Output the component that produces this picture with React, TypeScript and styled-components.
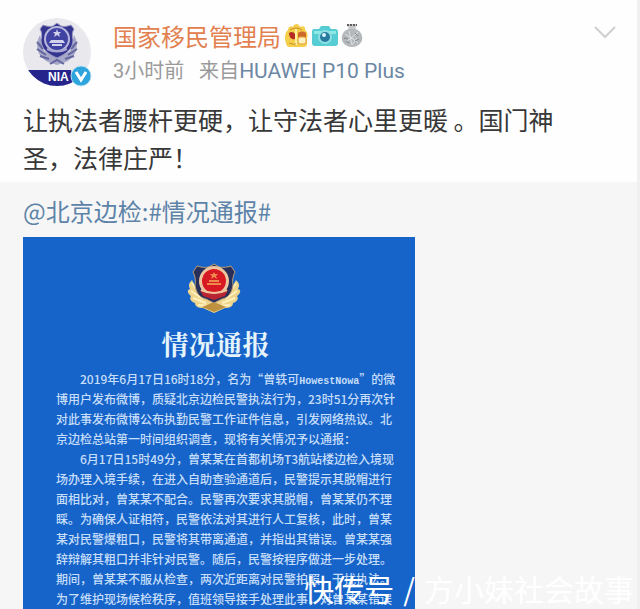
import React from "react";
import styled, { createGlobalStyle } from "styled-components";

const Global = createGlobalStyle`
  * { box-sizing: border-box; }
  body {
    margin: 0;
    background: #f6f6f6;
    font-family: Roboto, "Noto Sans CJK SC", sans-serif;
  }
  h1, h2, p { margin: 0; font-weight: 400; }
  a { color: inherit; text-decoration: none; }
`;

const Page = styled.main`
  position: relative;
  min-height: 100vh;
  border-right: 3px solid #f0f0f0;
`;

const Post = styled.article`
  background: #fefefe;
  padding: 18px 20px 6px 23px;
`;

const Header = styled.header`
  display: flex;
  align-items: flex-start;
  gap: 21px;
`;

const Author = styled.div`
  flex: 1;
  min-width: 0;
`;

const NameRow = styled.div`
  display: flex;
  align-items: center;
  gap: 3px;
  height: 36px;
`;

const Name = styled.h1`
  font-family: "Noto Sans CJK SC", sans-serif;
  font-size: 24px;
  line-height: 36px;
  color: #e2804f;
  white-space: nowrap;
`;

const Meta = styled.p`
  font-size: 20px;
  line-height: 34px;
  color: #9a9a9a;
  white-space: pre;
`;

const Device = styled.a`
  font-size: 21px;
  color: #6c87a3;
`;

const MoreButton = styled.button`
  margin: 6px 0 0;
  padding: 0;
  border: 0;
  background: none;
  line-height: 0;
`;

const Message = styled.p`
  font-family: "Noto Sans CJK SC", sans-serif;
  font-size: 25px;
  line-height: 38px;
  color: #383838;
  padding-top: 12px;
`;

const Repost = styled.section`
  padding: 11px 20px 0 23px;
`;

const RepostTitle = styled.p`
  font-family: "Noto Sans CJK SC", sans-serif;
  font-size: 24px;
  line-height: 36px;
  color: #5d83a8;
  margin-bottom: 8px;
`;

const Notice = styled.div`
  max-width: 392px;
  background: #1664c9;
  padding: 26px 20px 0 33px;
  display: flex;
  flex-direction: column;
`;

const Crest = styled.div`
  align-self: center;
  line-height: 0;
  margin-right: 24px;
`;

const NoticeTitle = styled.h2`
  align-self: center;
  margin: 10px 20px 6px 0;
  font-family: "Noto Serif CJK SC", "Noto Sans CJK SC", serif;
  font-size: 27px;
  line-height: 38px;
  font-weight: 700;
  color: #e6f5fb;
`;

const Paragraph = styled.p`
  font-family: "Noto Sans CJK SC", sans-serif;
  font-size: 12px;
  line-height: 20px;
  font-weight: 500;
  color: #c6defa;
  text-indent: 24px;
  white-space: nowrap;
`;

const Handle = styled.span`
  font-family: "Liberation Mono", monospace;
  font-size: 10px;
  line-height: 10px;
  font-weight: 700;
`;

const Watermark = styled.div`
  position: absolute;
  right: 3px;
  bottom: 0;
  display: flex;
  gap: 9px;
  font-family: "Noto Sans CJK SC", sans-serif;
  font-size: 30px;
  line-height: 42px;
  color: #ffffff;
  white-space: nowrap;
`;

const Avatar = () => (
  <svg width="69" height="69" viewBox="0 0 69 69" role="img" aria-label="NIA">
    <defs>
      <clipPath id="face"><circle cx="34" cy="34" r="34" /></clipPath>
    </defs>
    <circle cx="34" cy="34" r="34" fill="#e9e9ed" />
    <path clipPath="url(#face)" d="M0 52h48l3 17H0z" fill="#25248c" />
    <path d="M17 17c-6 11-2 22 8 27l9 3 9-3c10-5 14-16 8-27l-4 16-13 6-13-6z" fill="#a6a7c9" />
    <path d="M14 24l6 7M14 31l9 6M17 38l9 3M54 24l-6 7M54 31l-9 6M51 38l-9 3M27 46l7-4 7 4" stroke="#64669f" strokeWidth="2" fill="none" />
    <path d="M34 5l4 3c4 1 7 0 10-1l3 4c-2 3-2 7-1 11 0 9-7 14-16 18-9-4-16-9-16-18 1-4 1-8-1-11l3-4c3 1 6 2 10 1z" fill="#35358f" stroke="#9b9bc6" />
    <circle cx="34" cy="21" r="12" fill="#4143a2" stroke="#b8b8de" strokeWidth="2" />
    <path d="M34 11l1 3h3l-2 2 1 3-3-2-3 2 1-3-2-2h3zM28 22h12l2 3H26zM29 26h10v2H29z" fill="#d2d2ed" />
    <path d="M24 31q10 5 20 0" fill="none" stroke="#a8a8d2" strokeWidth="2" />
    <text x="25" y="63" fontFamily="Liberation Sans, sans-serif" fontSize="12" fontWeight="700" fill="#ffffff">NIA</text>
    <circle cx="58" cy="58" r="10" fill="#2da5dc" stroke="#b9dff1" strokeWidth="1" />
    <path d="M53 54l5 8 5-8" fill="none" stroke="#ffffff" strokeWidth="3" />
  </svg>
);

const PouchBadge = () => (
  <svg width="25" height="26" viewBox="0 0 25 26" aria-hidden="true">
    <path d="M4 7c0-3 3-5 5-3 1-4 6-4 7 0 3-2 6 0 5 3 3 2 3 6 2 8v7c-1 2-3 2-5 2H6c-3 0-4-2-4-4C0 15 1 9 4 7z" fill="#f5cf4a" />
    <path d="M5 10c2-2 5-1 6 1v5c-3 1-6-1-6-6z" fill="#b52d22" />
    <path d="M14 10c2-2 6-2 8 0v4h-8z" fill="#cf6a2d" />
    <path d="M12 6v16" stroke="#fff0a4" strokeWidth="2" />
    <rect x="14" y="14" width="8" height="7" rx="2" fill="#fff2c0" stroke="#de9d35" />
    <path d="M6 7q6-4 12 0M5 20q5 2 7 1" fill="none" stroke="#c7902e" />
  </svg>
);

const CameraBadge = () => (
  <svg width="26" height="24" viewBox="0 0 26 24" aria-hidden="true">
    <path d="M2 5h5l2-3h8l2 3h4q3 0 3 3v11q0 3-3 3H3q-3 0-3-3V8q0-3 2-3z" fill="#55cdd2" />
    <path d="M2 7h22v3H2z" fill="#8ee8e5" />
    <circle cx="13" cy="13" r="7" fill="#8ddfe3" />
    <circle cx="13" cy="13" r="5" fill="#287b9f" />
    <circle cx="12" cy="11" r="2" fill="#d7f6fa" />
  </svg>
);

const MedalBadge = () => (
  <svg width="22" height="26" viewBox="0 0 22 26" aria-hidden="true">
    <path d="M6 1h10l-2 6H8z" fill="#c8c8c8" />
    <path d="M6 2h10" stroke="#5f5f5f" strokeWidth="2" strokeDasharray="2 1" />
    <path d="M8 6c-5 1-8 6-7 11 1 4 5 7 10 7s9-3 10-7c1-5-2-10-7-11z" fill="#b4b8bb" />
    <path d="M4 11l6 4 7-6M5 18l6-3 6 5M8 8l3 14M16 15l-5 7" fill="none" stroke="#dfe2e4" strokeWidth="1" />
    <path d="M3 15l4 1M14 10l3 3M8 20l-3-2M14 18l4-2" stroke="#7f858a" />
  </svg>
);

const PoliceCrest = () => (
  <svg width="54" height="52" viewBox="0 0 54 52" role="img" aria-label="警徽">
    <path d="M5 17c-3 3-4 5-2 9-4 1-2 5 1 7-2 3 0 6 4 7 0 4 4 5 8 5l11 5 11-5c4 0 8-1 8-5 4-1 6-4 4-7 3-2 5-6 1-7 2-4 1-6-2-9l-7 15-15 5-15-5z" fill="#efd58c" />
    <path d="M5 20l8 11M4 28l12 8M6 35l13 5M11 42l13 1M49 20l-8 11M50 28l-12 8M48 35l-13 5M43 42l-13 1" stroke="#fff0bd" strokeWidth="2" />
    <path d="M15 44l12-5 12 5-12 5z" fill="#bd913f" />
    <path d="M27 1l5 3c5 1 8 0 12-1l4 6c-2 4-3 8-2 13-1 8-5 13-11 14l-8 4-8-4C13 35 9 30 8 22c1-5 0-9-2-13l4-6c4 1 7 2 12 1z" fill="#282f5b" stroke="#b89c72" />
    <circle cx="27" cy="18" r="15" fill="#edc6a0" />
    <circle cx="27" cy="18" r="12" fill="#d71924" />
    <path d="M27 9l1 2h3l-2 2 1 3-3-2-3 2 1-3-2-2h3zM20 20h14v2H20zM22 17h10v2H22z" fill="#f08a4c" />
    <path d="M13 27q14 7 28 0l-3 6-11 4-11-4z" fill="#b92432" />
    <path d="M14 27q13 6 26 0" fill="none" stroke="#efc49a" strokeWidth="2" />
  </svg>
);

const wide = (line: string) => line.replace(/,/g, "\uff0c").replace(/:/g, "\uff1a");

const opening = [
  "博用户发布微博,质疑北京边检民警执法行为,23时51分再次针",
  "对此事发布微博公布执勤民警工作证件信息,引发网络热议。北",
  "京边检总站第一时间组织调查,现将有关情况予以通报:",
];

const account = [
  "6月17日15时49分,曾某某在首都机场T3航站楼边检入境现",
  "场办理入境手续,在进入自助查验通道后,民警提示其脱帽进行",
  "面相比对,曾某某不配合。民警再次要求其脱帽,曾某某仍不理",
  "睬。为确保人证相符,民警依法对其进行人工复核,此时,曾某",
  "某对民警爆粗口,民警将其带离通道,并指出其错误。曾某某强",
  "辞辩解其粗口并非针对民警。随后,民警按程序做进一步处理。",
  "期间,曾某某不服从检查,两次近距离对民警拍照,干扰执法。",
  "为了维护现场候检秩序,值班领导接手处理此事,对曾某某错误",
];

const Lines = ({ lines }: { lines: string[] }) => (
  <>
    {lines.map((line, i) => (
      <React.Fragment key={line}>
        {i > 0 && <br />}
        {wide(line)}
      </React.Fragment>
    ))}
  </>
);

export default function App() {
  return (
    <Page lang="zh-CN">
      <Global />
      <Post>
        <Header>
          <Avatar />
          <Author>
            <NameRow>
              <Name>国家移民管理局</Name>
              <PouchBadge />
              <CameraBadge />
              <MedalBadge />
            </NameRow>
            <Meta>
              {"3小时前   来自"}
              <Device href="#device">HUAWEI P10 Plus</Device>
            </Meta>
          </Author>
          <MoreButton aria-label="更多">
            <svg width="24" height="16" viewBox="0 0 24 16">
              <path d="M2 3l10 10 10-10" fill="none" stroke="#cfcfcf" strokeWidth="2" />
            </svg>
          </MoreButton>
        </Header>
        <Message>
          {wide("让执法者腰杆更硬,让守法者心里更暖 。国门神")}
          <br />
          {wide("圣,法律庄严")}{"\uff01"}
        </Message>
      </Post>
      <Repost>
        <RepostTitle>
          <a href="#user">@北京边检</a>:<a href="#topic">#情况通报#</a>
        </RepostTitle>
        <Notice>
          <Crest><PoliceCrest /></Crest>
          <NoticeTitle>情况通报</NoticeTitle>
          <Paragraph>
            {wide("2019年6月17日16时18分,名为“曾轶可")}
            <Handle>HowestNowa</Handle>”的微
            <br />
            <Lines lines={opening} />
          </Paragraph>
          <Paragraph>
            <Lines lines={account} />
          </Paragraph>
        </Notice>
      </Repost>
      <Watermark>
        <span>快传号</span>
        <span>/</span>
        <span>方小妹社会故事</span>
      </Watermark>
    </Page>
  );
}
